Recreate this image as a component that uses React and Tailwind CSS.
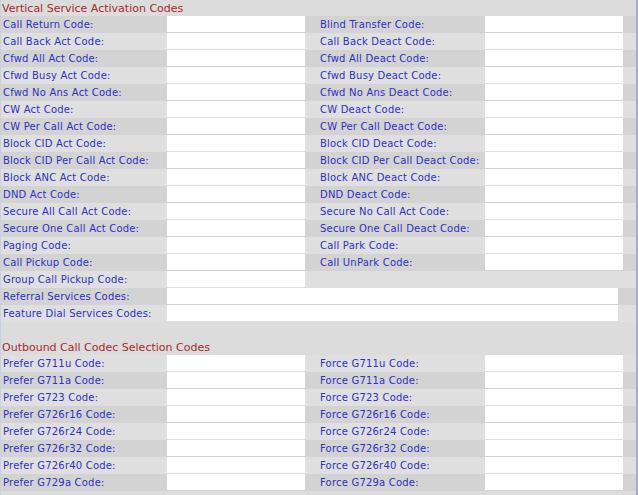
import React from "react";

const sec1 = [
  ["Call Return Code:", "Blind Transfer Code:"],
  ["Call Back Act Code:", "Call Back Deact Code:"],
  ["Cfwd All Act Code:", "Cfwd All Deact Code:"],
  ["Cfwd Busy Act Code:", "Cfwd Busy Deact Code:"],
  ["Cfwd No Ans Act Code:", "Cfwd No Ans Deact Code:"],
  ["CW Act Code:", "CW Deact Code:"],
  ["CW Per Call Act Code:", "CW Per Call Deact Code:"],
  ["Block CID Act Code:", "Block CID Deact Code:"],
  ["Block CID Per Call Act Code:", "Block CID Per Call Deact Code:"],
  ["Block ANC Act Code:", "Block ANC Deact Code:"],
  ["DND Act Code:", "DND Deact Code:"],
  ["Secure All Call Act Code:", "Secure No Call Act Code:"],
  ["Secure One Call Act Code:", "Secure One Call Deact Code:"],
  ["Paging Code:", "Call Park Code:"],
  ["Call Pickup Code:", "Call UnPark Code:"],
  ["Group Call Pickup Code:", null],
];

const codecs = ["G711u", "G711a", "G723", "G726r16", "G726r24", "G726r32", "G726r40", "G729a"];

function Row({ left, right, dark, wide }) {
  const bg = dark ? "bg-[#d3d3d3]" : "bg-[#dfdfdf]";
  return (
    <div className={`grid grid-cols-[166px_138px_180px_138px_1fr] h-[17px] ${bg}`}>
      <div className="pl-[2px] leading-[18px] whitespace-nowrap tracking-[0.2px]">{left}</div>
      {wide ? (
        <div className="col-span-4">
          <div className="h-[16px] w-[451px] bg-white" />
        </div>
      ) : (
        <>
          <div className="h-[16px] bg-white" />
          {right ? (
            <>
              <div className="pl-[15px] leading-[18px] whitespace-nowrap tracking-[0.2px]">{right}</div>
              <div className="h-[16px] bg-white" />
            </>
          ) : (
            <>
              <div />
              <div />
            </>
          )}
          <div />
        </>
      )}
    </div>
  );
}

export default function App() {
  return (
    <div
      className="w-[638px] h-[495px] overflow-hidden bg-[#dcdcdc] border-l border-r-2 border-l-[#c9d0e0] border-r-[#9eafc8] text-[10px] text-[#2f2fc4]"
      style={{ fontFamily: '"DejaVu Sans", Verdana, sans-serif' }}
    >
      <div className="h-[16px] pl-[1px] text-[11px] leading-[17px] text-[#a8282c]">
        Vertical Service Activation Codes
      </div>
      {sec1.map(([l, r], i) => (
        <Row key={l} left={l} right={r} dark={i % 2 === 0} />
      ))}
      <Row left="Referral Services Codes:" dark wide />
      <Row left="Feature Dial Services Codes:" dark={false} wide />
      <div className="h-[17px]" />
      <div className="h-[16px] pl-[1px] text-[11px] leading-[17px] text-[#a8282c]">
        Outbound Call Codec Selection Codes
      </div>
      {codecs.map((c, i) => (
        <Row key={c} left={`Prefer ${c} Code:`} right={`Force ${c} Code:`} dark={i % 2 === 1} />
      ))}
    </div>
  );
}
